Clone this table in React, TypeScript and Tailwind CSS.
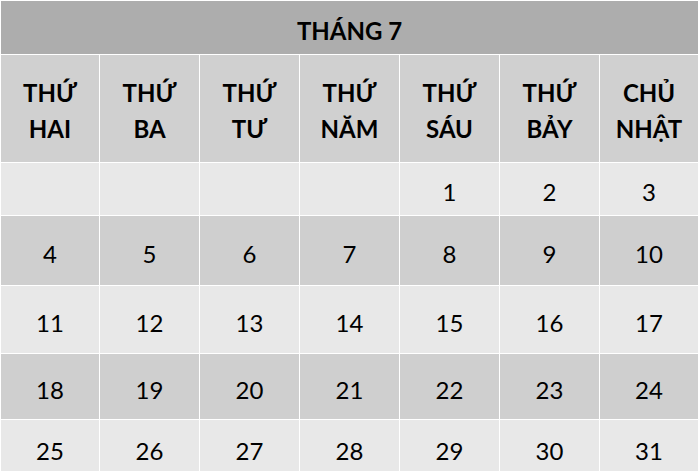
import React from "react";

const DAYS = [
  ["THỨ", "HAI"],
  ["THỨ", "BA"],
  ["THỨ", "TƯ"],
  ["THỨ", "NĂM"],
  ["THỨ", "SÁU"],
  ["THỨ", "BẢY"],
  ["CHỦ", "NHẬT"],
];

// weeks of July, leading blanks for Mon-Thu
const WEEKS: (number | null)[][] = [
  [null, null, null, null, 1, 2, 3],
  [4, 5, 6, 7, 8, 9, 10],
  [11, 12, 13, 14, 15, 16, 17],
  [18, 19, 20, 21, 22, 23, 24],
  [25, 26, 27, 28, 29, 30, 31],
];

const ROW_STYLES = [
  "h-[52px] bg-[#e8e8e8]",
  "h-[69px] bg-[#cfcfcf]",
  "h-[67px] bg-[#e8e8e8]",
  "h-[65px] bg-[#cfcfcf]",
  "h-[56px] bg-[#e8e8e8]",
];

const COLS = "grid shrink-0 grid-cols-[98px_99px_99px_99px_99px_99px_98px] gap-x-px";

export default function App() {
  return (
    <div
      className="w-[698px] h-[471px] overflow-hidden bg-white pt-px pl-px flex flex-col gap-y-px text-black"
      style={{ fontFamily: "Lato, 'Open Sans', sans-serif" }}
    >
      <div className="h-[53px] shrink-0 bg-[#adadad] flex items-center justify-center pt-[7px] text-[24px] font-bold">
        THÁNG 7
      </div>

      <div className={COLS}>
        {DAYS.map(([a, b], i) => (
          <div
            key={i}
            className="h-[107px] bg-[#d0d0d0] flex flex-col items-center justify-center pt-[5px] text-[24px] font-bold leading-[36px]"
          >
            <span>{a}</span>
            <span>{b}</span>
          </div>
        ))}
      </div>

      {WEEKS.map((week, r) => (
        <div key={r} className={COLS}>
          {week.map((d, c) => (
            <div
              key={c}
              className={`${ROW_STYLES[r]} flex items-center justify-center pt-[6px] text-[24px]`}
            >
              {d ?? ""}
            </div>
          ))}
        </div>
      ))}
    </div>
  );
}
